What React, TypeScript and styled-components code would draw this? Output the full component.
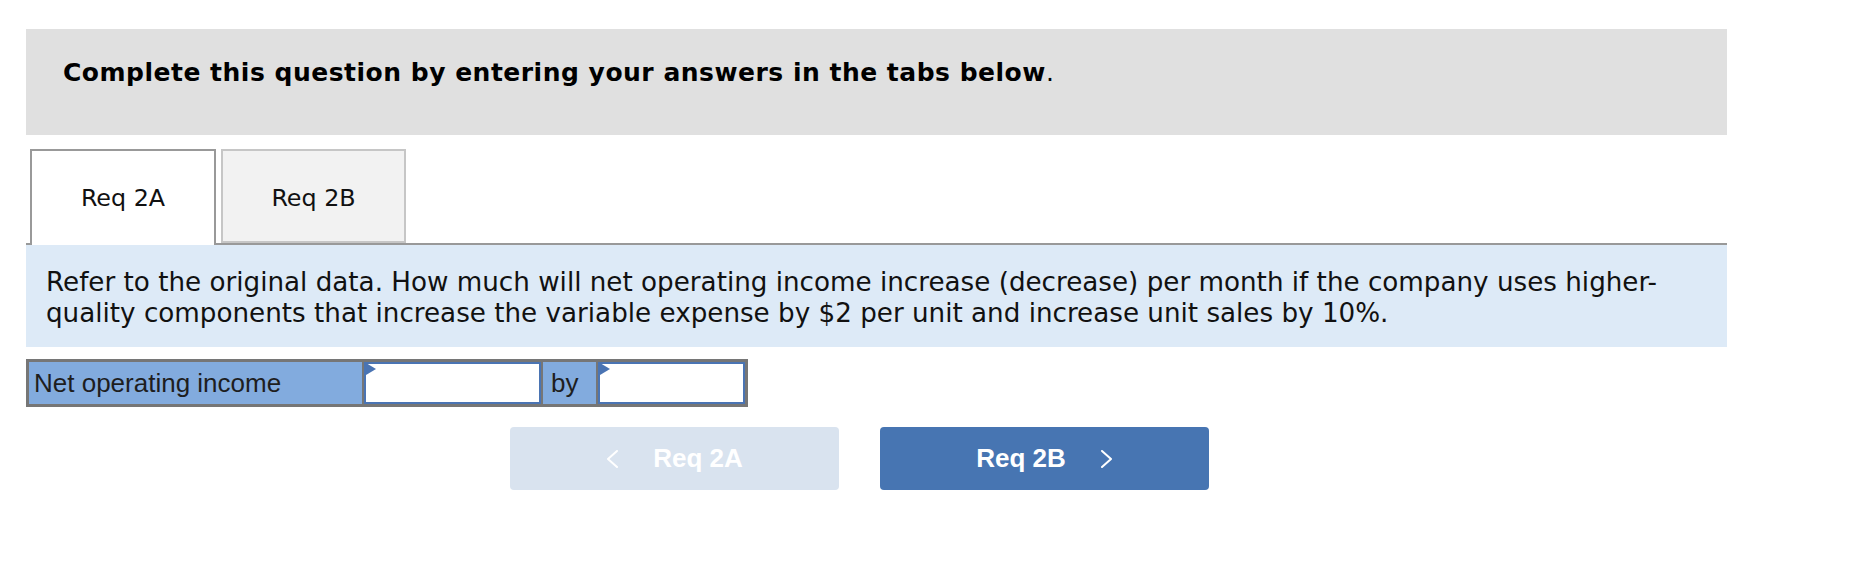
import React from "react";
import styled, { createGlobalStyle } from "styled-components";

const Global = createGlobalStyle`
  html, body { margin: 0; padding: 0; background: #ffffff; }
  body { font-family: "DejaVu Sans", Verdana, sans-serif; }
`;

const Page = styled.div`
  width: 1701px;
  margin-left: 26px;
  padding-top: 29px;
`;

const Header = styled.div`
  height: 106px;
  box-sizing: border-box;
  background: #e0e0e0;
  padding: 29px 0 0 37px;
  font-family: "DejaVu Sans", Verdana, sans-serif;
  font-weight: bold;
  font-size: 25px;
  letter-spacing: 0.5px;
  line-height: 30px;
  color: #000;
`;

const Dot = styled.span`
  font-weight: normal;
`;

const TabRow = styled.div`
  display: flex;
  align-items: flex-start;
  gap: 5px;
  margin-top: 14px;
  padding-left: 4px;
  height: 94px;
  border-bottom: 2px solid #999999;
`;

const Tab = styled.div<{ $active?: boolean }>`
  box-sizing: border-box;
  width: ${(p) => (p.$active ? 186 : 185)}px;
  height: ${(p) => (p.$active ? 96 : 94)}px;
  padding-top: ${(p) => (p.$active ? 0 : 4)}px;
  display: flex;
  align-items: center;
  justify-content: center;
  border: 2px solid ${(p) => (p.$active ? "#999999" : "#c6c6c6")};
  border-bottom: ${(p) => (p.$active ? "none" : "2px solid #c6c6c6")};
  background: ${(p) => (p.$active ? "#ffffff" : "#f2f2f2")};
  font-family: "DejaVu Sans", Verdana, sans-serif;
  font-size: 23.8px;
  color: #111;
  position: relative;
  z-index: 1;
`;

const Question = styled.div`
  background: #ddeaf7;
  padding: 22px 20px 18px;
  font-family: "DejaVu Sans", Verdana, sans-serif;
  font-size: 26.2px;
  line-height: 31px;
  color: #111;
`;

const AnswerTable = styled.div`
  display: inline-flex;
  margin-top: 12px;
  border: 3px solid #767676;
  background: #767676;
  gap: 2px;
  height: 42px;
`;

const LabelCell = styled.div<{ $w: number }>`
  width: ${(p) => p.$w}px;
  box-sizing: border-box;
  background: #82abde;
  display: flex;
  align-items: center;
  padding-left: ${(p) => (p.$w > 100 ? 5 : 8)}px;
  font-family: "Liberation Sans", Arial, sans-serif;
  font-size: 26px;
  color: #1e1e1e;
`;

const InputCell = styled.div<{ $w: number }>`
  position: relative;
  width: ${(p) => p.$w}px;
  box-sizing: border-box;
  background: #ffffff;
  border: 2px solid #4a74b3;
`;

const Flag = styled.span`
  position: absolute;
  left: 0;
  top: -1px;
  width: 0;
  height: 0;
  border-top: 6px solid transparent;
  border-bottom: 6px solid transparent;
  border-left: 10px solid #4a74b3;
`;

const ButtonRow = styled.div`
  display: flex;
  gap: 41px;
  margin-top: 20px;
  margin-left: 484px;
`;

const NavButton = styled.div<{ $disabled?: boolean }>`
  width: 329px;
  height: 63px;
  border-radius: 4px;
  background: ${(p) => (p.$disabled ? "#d9e3ef" : "#4775b2")};
  display: flex;
  align-items: center;
  justify-content: center;
  gap: 34px;
  font-family: "Liberation Sans", Arial, sans-serif;
  font-weight: bold;
  font-size: 26px;
  color: #ffffff;
`;

const Chevron = ({ dir }: { dir: "left" | "right" }) => (
  <svg width="13" height="18" viewBox="0 0 13 18" fill="none">
    <polyline
      points={dir === "left" ? "11,1 2,9 11,17" : "2,1 11,9 2,17"}
      stroke="#ffffff"
      strokeWidth="2"
      strokeLinecap="round"
      strokeLinejoin="round"
    />
  </svg>
);

export default function App() {
  return (
    <>
      <Global />
      <Page>
        <Header>
          Complete this question by entering your answers in the tabs below<Dot>.</Dot>
        </Header>
        <TabRow>
          <Tab $active>Req 2A</Tab>
          <Tab>Req 2B</Tab>
        </TabRow>
        <Question>
          Refer to the original data. How much will net operating income increase (decrease) per month if the company uses higher-
          <br />
          quality components that increase the variable expense by $2 per unit and increase unit sales by 10%.
        </Question>
        <AnswerTable>
          <LabelCell $w={333}>Net operating income</LabelCell>
          <InputCell $w={177}>
            <Flag />
          </InputCell>
          <LabelCell $w={53}>by</LabelCell>
          <InputCell $w={147}>
            <Flag />
          </InputCell>
        </AnswerTable>
        <ButtonRow>
          <NavButton $disabled>
            <Chevron dir="left" />
            <span>Req 2A</span>
          </NavButton>
          <NavButton>
            <span>Req 2B</span>
            <Chevron dir="right" />
          </NavButton>
        </ButtonRow>
      </Page>
    </>
  );
}
